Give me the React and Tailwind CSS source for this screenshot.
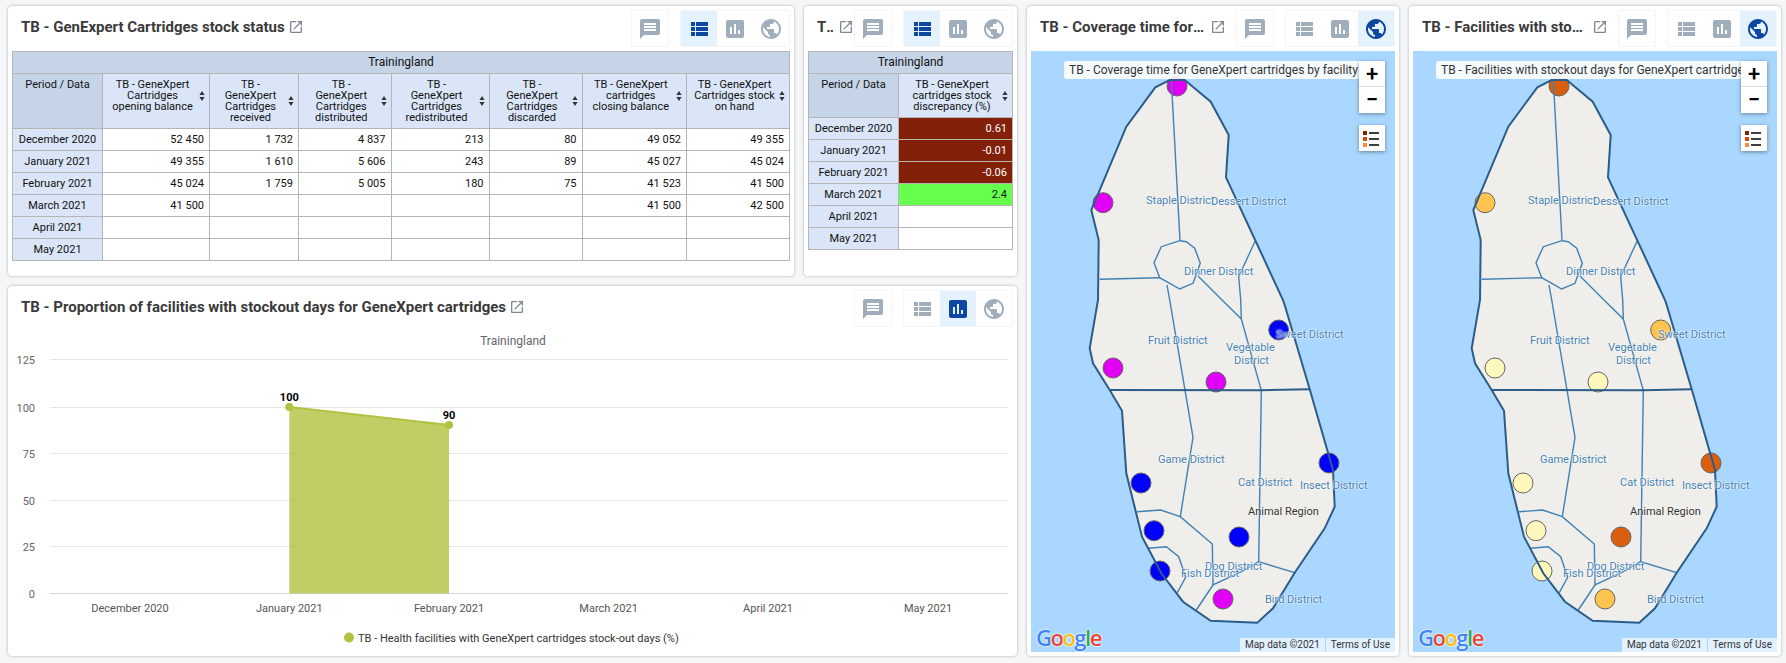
import React from "react";

const P = {
  message:
    "M20 2H4c-1.1 0-1.99.9-1.99 2L2 22l4-4h14c1.1 0 2-.9 2-2V4c0-1.1-.9-2-2-2zm-2 12H6v-2h12v2zm0-3H6V9h12v2zm0-3H6V6h12v2z",
  table:
    "M4 14h4v-4H4v4zm0 5h4v-4H4v4zM4 9h4V5H4v4zm5 5h12v-4H9v4zm0 5h12v-4H9v4zM9 5v4h12V5H9z",
  chart:
    "M19 3H5c-1.1 0-2 .9-2 2v14c0 1.1.9 2 2 2h14c1.1 0 2-.9 2-2V5c0-1.1-.9-2-2-2zM9 17H7v-7h2v7zm4 0h-2V7h2v10zm4 0h-2v-4h2v4z",
  map: "M12 2C6.48 2 2 6.48 2 12s4.48 10 10 10 10-4.48 10-10S17.52 2 12 2zm-1 17.93c-3.95-.49-7-3.85-7-7.93 0-.62.08-1.21.21-1.79L9 15v1c0 1.1.9 2 2 2v1.93zm6.9-2.54c-.26-.81-1-1.39-1.9-1.39h-1v-3c0-.55-.45-1-1-1H8v-2h2c.55 0 1-.45 1-1V7h2c1.1 0 2-.9 2-2v-.41c2.93 1.19 5 4.06 5 7.41 0 2.08-.8 3.97-2.1 5.39z",
  launch:
    "M19 19H5V5h7V3H5c-1.11 0-2 .9-2 2v14c0 1.1.89 2 2 2h14c1.1 0 2-.9 2-2v-7h-2v7zM14 3v2h3.59l-9.83 9.83 1.41 1.41L19 6.41V10h2V3h-7z",
};

const Icon = ({ d, className }) => (
  <svg viewBox="0 0 24 24" className={className} fill="currentColor">
    <path d={d} />
  </svg>
);

const Card = ({ title, titleClass, iconClass, active, className, children }) => (
  <div
    className={`flex flex-col overflow-hidden rounded-[4px] bg-white shadow-[0_0_3px_rgba(0,0,0,0.3)] ${className}`}
  >
    <div className="flex h-[45px] shrink-0 items-start pr-[4px] pl-[13px]">
      <div className="flex min-w-0 flex-1 items-center pt-[11px]">
        <span
          className={`truncate text-[15px] leading-[20px] font-bold text-[#3a3a3a] ${titleClass}`}
        >
          {title}
        </span>
        <Icon d={P.launch} className={`h-4 w-4 shrink-0 text-[#7d8894] ${iconClass}`} />
      </div>
      <div className="mt-[4px] flex shrink-0 gap-[11px] text-[#a0adba]">
        <div className="flex h-[37px] w-[38px] items-center justify-center rounded-[2px] border border-[#f5f5f5]">
          <Icon d={P.message} className="h-6 w-6" />
        </div>
        <div className="flex h-[37px] w-[110px] rounded-[2px] border border-[#f5f5f5]">
          {["table", "chart", "map"].map((k) => (
            <div
              key={k}
              className={`flex flex-1 items-center justify-center ${
                k === active ? "bg-[#e3f2fd] text-[#0d47a1]" : ""
              }`}
            >
              <Icon d={P[k]} className="h-6 w-6" />
            </div>
          ))}
        </div>
      </div>
    </div>
    {children}
  </div>
);

const SortIcon = () => (
  <svg viewBox="0 0 6 10" className="ml-[2px] h-[10px] w-[6px] shrink-0 text-[#333]" fill="currentColor">
    <path d="M3 0l2.6 4H.4zM3 10L.4 6h5.2z" />
  </svg>
);

const cell = "border border-[#b5b5b5] px-[5px] text-[11px] leading-[11px]";

const PivotTable = ({ widths, headers, rows, className }) => (
  <table className={`table-fixed border-collapse text-[#111] ${className}`}>
    <colgroup>
      {widths.map((w, i) => (
        <col key={i} style={{ width: w }} />
      ))}
    </colgroup>
    <tbody>
      <tr className="h-[22px]">
        <td colSpan={widths.length} className={`${cell} bg-[#c5d4e7] text-center text-[12px]`}>
          Trainingland
        </td>
      </tr>
      <tr>
        <td className={`${cell} bg-[#c5d4e7] pt-[5px] text-center align-top`}>Period / Data</td>
        {headers.map((h, i) => (
          <td key={i} className={`${cell} bg-[#dae6f8] !pr-[4px] pt-[5px] pb-[5px] align-top`}>
            <div className="flex items-center">
              <div className="flex-1 text-center">
                {h.map((l) => (
                  <div key={l} className="whitespace-nowrap">
                    {l}
                  </div>
                ))}
              </div>
              <SortIcon />
            </div>
          </td>
        ))}
      </tr>
      {rows.map((r) => (
        <tr key={r[0]} className="h-[22px]">
          <td className={`${cell} bg-[#dae6f8] text-center whitespace-nowrap`}>{r[0]}</td>
          {r.slice(1).map((v, i) => {
            let color = "";
            if (v === "0.61" || v === "-0.01" || v === "-0.06") color = "bg-[#82200a] text-white";
            if (v === "2.4") color = "bg-[#66ff4d]";
            return (
              <td key={i} className={`${cell} text-right ${color}`}>
                {v}
              </td>
            );
          })}
        </tr>
      ))}
    </tbody>
  </table>
);

const stockHeaders = [
  ["TB - GeneXpert", "Cartridges", "opening balance"],
  ["TB -", "GeneXpert", "Cartridges", "received"],
  ["TB -", "GeneXpert", "Cartridges", "distributed"],
  ["TB -", "GeneXpert", "Cartridges", "redistributed"],
  ["TB -", "GeneXpert", "Cartridges", "discarded"],
  ["TB - GeneXpert", "cartridges", "closing balance"],
  ["TB - GeneXpert", "Cartridges stock", "on hand"],
];

const stockRows = [
  ["December 2020", "52 450", "1 732", "4 837", "213", "80", "49 052", "49 355"],
  ["January 2021", "49 355", "1 610", "5 606", "243", "89", "45 027", "45 024"],
  ["February 2021", "45 024", "1 759", "5 005", "180", "75", "41 523", "41 500"],
  ["March 2021", "41 500", "", "", "", "", "41 500", "42 500"],
  ["April 2021", "", "", "", "", "", "", ""],
  ["May 2021", "", "", "", "", "", "", ""],
];

const discrepancyRows = [
  ["December 2020", "0.61"],
  ["January 2021", "-0.01"],
  ["February 2021", "-0.06"],
  ["March 2021", "2.4"],
  ["April 2021", ""],
  ["May 2021", ""],
];

const gridLines = [
  [125, 28.5],
  [100, 76.5],
  [75, 122.5],
  [50, 169.5],
  [25, 215.5],
];

const months = [
  ["December 2020", 122],
  ["January 2021", 281.3],
  ["February 2021", 441],
  ["March 2021", 600.6],
  ["April 2021", 760],
  ["May 2021", 920],
];

const StockoutChart = () => (
  <svg width="1009" height="325" className="block font-[Roboto]">
    <text x="505" y="14" textAnchor="middle" fontSize="12" fill="#666">
      Trainingland
    </text>
    {gridLines.map(([v, y]) => (
      <line key={v} x1="42" x2="1000" y1={y} y2={y} stroke="#e6e6e6" />
    ))}
    <line x1="42" x2="1000" y1="262.5" y2="262.5" stroke="#ccd6eb" />
    {[...gridLines, [0, 262.5]].map(([v, y]) => (
      <text key={v} x="27" y={y + 4} textAnchor="end" fontSize="11" fill="#666">
        {v}
      </text>
    ))}
    {months.map(([m, x]) => (
      <text key={m} x={x} y="281" textAnchor="middle" fontSize="11" fill="#555">
        {m}
      </text>
    ))}
    <path d="M281.3 76L441 94V262.5H281.3Z" fill="#b1c240" fillOpacity="0.8" />
    <path d="M281.3 76L441 94" stroke="#b1c240" strokeWidth="2" fill="none" />
    <circle cx="281.3" cy="76" r="4" fill="#b1c240" />
    <circle cx="441" cy="94" r="4" fill="#b1c240" />
    <text x="281.3" y="70" textAnchor="middle" fontSize="11" fontWeight="700" fill="#000" stroke="#fff" strokeWidth="2" paintOrder="stroke">
      100
    </text>
    <text x="441" y="88" textAnchor="middle" fontSize="11" fontWeight="700" fill="#000" stroke="#fff" strokeWidth="2" paintOrder="stroke">
      90
    </text>
    <circle cx="341" cy="306.5" r="5" fill="#b1c240" />
    <text x="350" y="310.5" fontSize="11" fill="#333">
      TB - Health facilities with GeneXpert cartridges stock-out days (%)
    </text>
  </svg>
);

const outline =
  "138.7,29 153.7,29 179.7,50.7 197.7,84 195,126.3 252,249 253.7,254 278.7,338.3 302,419 303.7,455.7 293.7,477.3 263.7,521.7 242,557.3 226.3,571.7 179.7,569.7 152,550.7 130.3,522.3 111,485.7 95.3,422.3 91,359.7 78.7,339 62,312.3 58.7,297.3 67,249 67.7,189 60.3,159 95.3,75.7 124.3,36.3";

const districtLines = [
  "140.3,29 149,189.7",
  "149,189.7 130.3,195.7 123,211.7 128.7,226.7 148.7,238 162,232.3 169.3,212.3 163.7,197.3 155.3,190.7 149,189.7",
  "68.7,228.3 128.7,226.7",
  "136,234 138.7,249 162,386.3 149.3,465.7",
  "167,225 191,249 210.3,268",
  "224.3,189.7 207.7,225.7 209.7,249 210.3,268 230.3,339.3 227.7,510.7 263.7,521.7",
  "106,460.7 129.7,459 149.3,465.7 181.3,493 182,534 210.3,520.7 227.7,510.7",
  "182,534 165.3,559",
  "117,497.3 135.3,495.7 147.7,505.7 154.7,526.3 146.3,541.7",
];

const points = [
  [146, 35],
  [72, 151.7],
  [247.7, 279],
  [82, 317],
  [185, 331],
  [298, 412],
  [110, 432],
  [123, 479.7],
  [208, 486],
  [129, 520],
  [192, 548],
];

const labels = [
  ["Staple District", "left-[115px] top-[143px]"],
  ["Dessert District", "left-[180px] top-[144px]"],
  ["Dinner District", "left-[153px] top-[214px]"],
  ["Fruit District", "left-[117px] top-[283px]"],
  ["Vegetable", "left-[195px] top-[290px]"],
  ["District", "left-[203px] top-[303px]"],
  ["Sweet District", "left-[245px] top-[277px]"],
  ["Game District", "left-[127px] top-[402px]"],
  ["Cat District", "left-[207px] top-[425px]"],
  ["Insect District", "left-[269px] top-[428px]"],
  ["Dog District", "left-[174px] top-[509px]"],
  ["Fish District", "left-[150px] top-[516px]"],
  ["Bird District", "left-[234px] top-[542px]"],
];

const FacilityMap = ({ tooltip, tooltipClass, colors }) => (
  <div className="relative mx-[4px] h-[601px] overflow-hidden bg-[#a9d7ff]">
    <svg width="364" height="601" className="block">
      <polygon points={outline} fill="#f0eeea" />
      {points.map(([x, y], i) => (
        <circle key={i} cx={x} cy={y} r="10" fill={colors[i]} stroke="#666" strokeWidth="1" />
      ))}
      {districtLines.map((l) => (
        <polyline key={l} points={l} fill="none" stroke="#3f80b5" strokeWidth="1.4" />
      ))}
      <polyline points="78.7,339 230.3,339.3 278.7,338.3" fill="none" stroke="#2b5d88" strokeWidth="2" />
      <polygon points={outline} fill="none" stroke="#2b5d88" strokeWidth="2" />
    </svg>

    {labels.map(([text, pos]) => (
      <span
        key={text}
        className={`absolute text-[11px] leading-[14px] whitespace-nowrap text-[#4682b4] [text-shadow:0_0_2px_#fff,0_0_2px_#fff] ${pos}`}
      >
        {text}
      </span>
    ))}
    <span className="absolute top-[454px] left-[217px] text-[11px] leading-[14px] whitespace-nowrap text-[#333] [text-shadow:0_0_2px_#fff]">
      Animal Region
    </span>

    <div
      className={`absolute top-[10px] h-[18px] overflow-hidden rounded-[3px] bg-white/90 pl-[5px] text-[12px] leading-[18px] whitespace-nowrap text-[#333] ${tooltipClass}`}
    >
      {tooltip}
    </div>

    <div className="absolute top-[10px] right-[10px] flex h-[52px] w-[26px] flex-col bg-white text-black shadow-[0_1px_4px_rgba(0,0,0,0.4)]">
      <div className="flex h-[26px] items-center justify-center border-b border-[#ddd] text-[22px] leading-none font-medium">
        +
      </div>
      <div className="flex h-[26px] items-center justify-center text-[22px] leading-none font-medium">
        −
      </div>
    </div>
    <div className="absolute top-[74px] right-[10px] flex h-[26px] w-[26px] items-center justify-center bg-white shadow-[0_1px_4px_rgba(0,0,0,0.4)]">
      <svg width="20" height="18" viewBox="0 0 20 18">
        <rect x="1" y="2" width="4" height="4" fill="#7f2704" />
        <rect x="1" y="8" width="4" height="4" fill="#d94801" />
        <rect x="1" y="14" width="4" height="4" fill="#fd8d3c" />
        <path d="M7 4h10M7 10h10M7 16h10" stroke="#000" strokeWidth="1.4" />
      </svg>
    </div>

    <div className="absolute bottom-[3px] left-[5px] font-[Open_Sans] text-[22px] leading-[24px] font-semibold tracking-[-1.5px] [text-shadow:0_0_2px_#fff,0_0_2px_#fff]">
      <span className="text-[#4285f4]">G</span>
      <span className="text-[#ea4335]">o</span>
      <span className="text-[#fbbc05]">o</span>
      <span className="text-[#4285f4]">g</span>
      <span className="text-[#34a853]">l</span>
      <span className="text-[#ea4335]">e</span>
    </div>
    <div className="absolute right-0 bottom-0 flex h-[14px] gap-[1px] text-[10px] leading-[14px] text-[#333]">
      <span className="bg-white/65 px-[5px]">Map data ©2021</span>
      <span className="bg-white/65 px-[5px]">Terms of Use</span>
    </div>
  </div>
);

const coverageColors = [
  "#e100f5", "#e100f5", "#0000ff", "#e100f5", "#e100f5", "#0000ff",
  "#0000ff", "#0000ff", "#0000ff", "#0000ff", "#e100f5",
];

const stockoutColors = [
  "#d95f0e", "#fec44f", "#fec44f", "#fff7bc", "#fff7bc", "#d95f0e",
  "#fff7bc", "#fff7bc", "#d95f0e", "#fff7bc", "#fec44f",
];

export default function App() {
  return (
    <div className="flex h-[663px] w-[1786px] gap-[10px] overflow-hidden bg-[#f4f6f8] pt-[6px] pl-2 font-[Roboto]">
      <div className="flex w-[1009px] flex-col gap-[10px]">
        <div className="flex gap-[10px]">
          <Card
            title="TB - GenExpert Cartridges stock status"
            iconClass="ml-[3px]"
            active="table"
            className="h-[270px] w-[786px]"
          >
            <PivotTable
              className="ml-[4px] w-[777px]"
              widths={[90, 107, 89, 92.5, 98, 93, 104.5, 103]}
              headers={stockHeaders}
              rows={stockRows}
            />
          </Card>
          <Card
            title="TB - GeneXpert cartridges stock discrepancy"
            titleClass="max-w-[18px]"
            iconClass="ml-[5px]"
            active="table"
            className="h-[270px] w-[213px]"
          >
            <PivotTable
              className="ml-[4px] w-[204px]"
              widths={[90, 114]}
              headers={[["TB - GeneXpert", "cartridges stock", "discrepancy (%)"]]}
              rows={discrepancyRows}
            />
          </Card>
        </div>
        <Card
          title="TB - Proportion of facilities with stockout days for GeneXpert cartridges"
          iconClass="ml-[3px]"
          active="chart"
          className="h-[370px]"
        >
          <StockoutChart />
        </Card>
      </div>
      <Card
        title="TB - Coverage time for GeneXpert cartridges by facility"
        titleClass="w-[167px]"
        iconClass="ml-[3px]"
        active="map"
        className="h-[650px] w-[372px]"
      >
        <FacilityMap
          tooltip="TB - Coverage time for GeneXpert cartridges by facility"
          tooltipClass="left-[33px] w-[298px]"
          colors={coverageColors}
        />
      </Card>
      <Card
        title="TB - Facilities with stockout days for GeneXpert cartridges"
        titleClass="w-[167px]"
        iconClass="ml-[3px]"
        active="map"
        className="h-[650px] w-[372px]"
      >
        <FacilityMap
          tooltip="TB - Facilities with stockout days for GeneXpert cartridges by facility"
          tooltipClass="left-[23px] w-[310px]"
          colors={stockoutColors}
        />
      </Card>
    </div>
  );
}
